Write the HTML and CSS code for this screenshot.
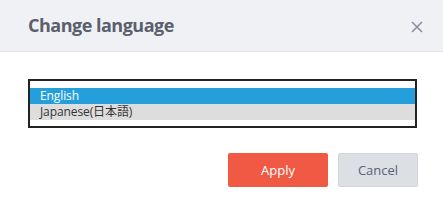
FILE: index.html
```html
<!DOCTYPE html>
<html>
<head>
<meta charset="utf-8">
<link rel="stylesheet" href="styles.css">
</head>
<body>
<div class="dialog">
  <div class="header">
    <div class="title">Change language</div>
    <svg class="close" width="12" height="12" viewBox="0 0 12 12"><path d="M1 1L11 11M11 1L1 11" stroke="#8b909c" stroke-width="1.6" fill="none"/></svg>
  </div>
  <div class="body">
    <div class="listbox">
      <div class="option selected">English</div>
      <div class="option hover">Japanese(日本語)</div>
    </div>
    <div class="actions">
      <div class="btn apply">Apply</div>
      <div class="btn cancel">Cancel</div>
    </div>
  </div>
</div>
</body>
</html>
```
FILE: styles.css
```css
html, body { margin: 0; padding: 0; background: #fff; }
body { font-family: "Open Sans", "Noto Sans CJK JP", sans-serif; width: 443px; height: 210px; overflow: hidden; }
.dialog { width: 443px; }
.header {
  height: 52px; box-sizing: border-box;
  background: #f0f1f5; border-bottom: 1px solid #e2e3e8;
  display: flex; align-items: center; justify-content: space-between;
  padding: 0 20px 0 28px;
}
.title { font-size: 18px; font-weight: 700; color: #5b5f6d; letter-spacing: -0.5px; margin-top: -1px; }
.close { display: block; margin-top: 2px; }
.body { padding: 27px 25px 0 28px; }
.listbox {
  width: 389px; height: 49px; box-sizing: border-box;
  border: 2px solid #222; padding-top: 7px;
}
.option { height: 16px; line-height: 16px; font-size: 12px; padding-left: 10px; color: #333; letter-spacing: -0.1px; }
.option.selected { background: #259fdb; color: #fff; }
.option.hover { background: #dddddd; }
.actions { display: flex; justify-content: flex-end; gap: 10px; margin-top: 25px; }
.btn { height: 34px; box-sizing: border-box; border-radius: 2px; font-size: 13px; display: flex; align-items: center; justify-content: center; }
.apply { width: 100px; background: #f05a44; color: #fff; }
.cancel { width: 80px; background: #dce0e5; border: 1px solid #d3d7dc; color: #5b6170; }
```
